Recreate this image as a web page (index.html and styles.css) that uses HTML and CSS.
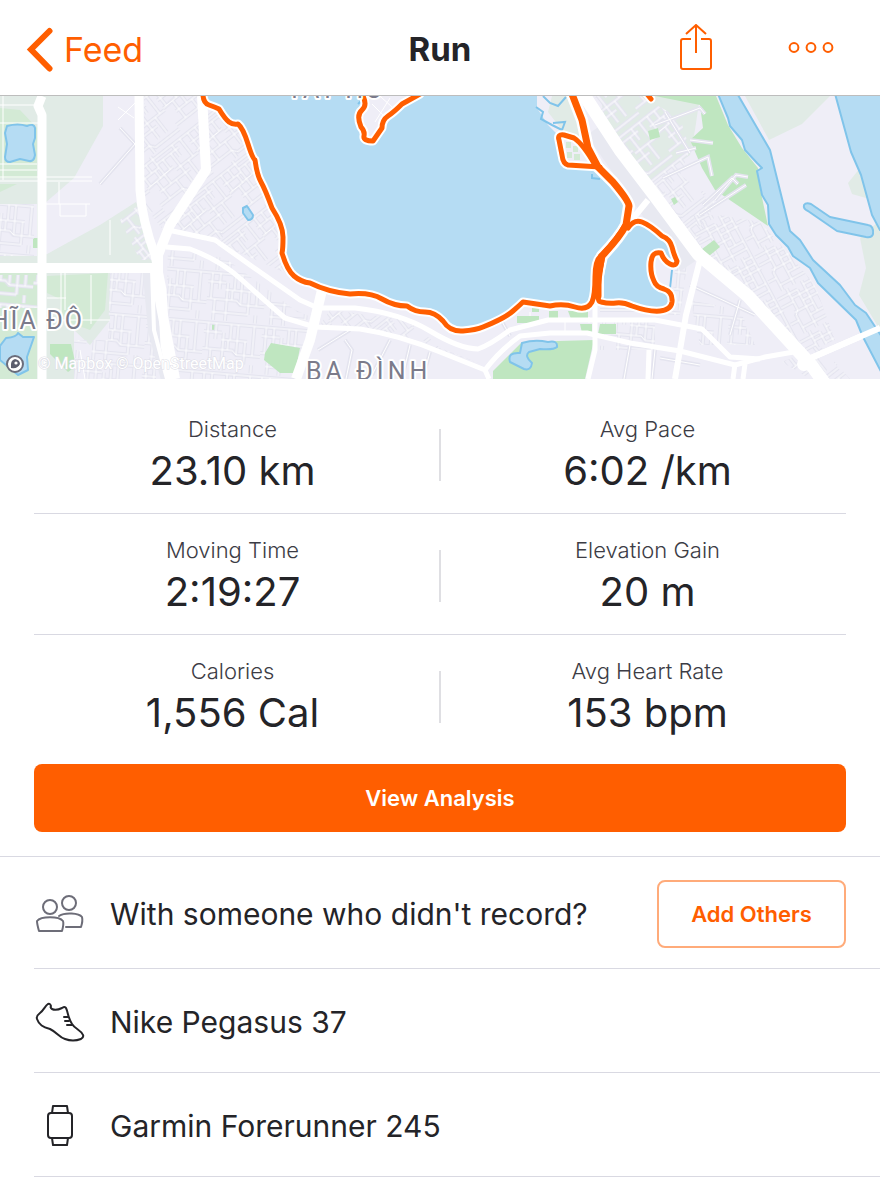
FILE: index.html
```html
<!DOCTYPE html>
<html lang="en">
<head>
    <meta charset="UTF-8">
    <meta name="viewport" content="width=device-width, initial-scale=1">
    <title>Run</title>
    <link rel="stylesheet" href="styles.css">
</head>
<body>
    <header class="navbar">
        <a class="back" href="#feed">
            <svg width="28" height="46" viewBox="0 0 28 46" aria-hidden="true"><path d="M23.500 4 5 22.500 23.500 41.500" fill="none" stroke="currentColor" stroke-width="6" stroke-linecap="round" stroke-linejoin="miter"/></svg>
            <span>Feed</span>
        </a>
        <h1>Run</h1>
        <div class="actions">
            <button type="button" aria-label="Share">
                <svg width="34" height="48" viewBox="0 0 34 48" aria-hidden="true"><g fill="none" stroke="currentColor" stroke-width="2"><path d="M11 15H3Q1 15 1 17V43Q1 45 3 45H29Q31 45 31 43V17Q31 15 29 15H21"/><path d="M16 29V1M6 10 16 1 26 10"/></g></svg>
            </button>
            <button type="button" aria-label="More">
                <svg width="46" height="12" viewBox="0 0 46 12" aria-hidden="true"><g fill="none" stroke="currentColor" stroke-width="2"><circle cx="6" cy="5.500" r="4.400"/><circle cx="23" cy="5.500" r="4.400"/><circle cx="40" cy="5.500" r="4.400"/></g></svg>
            </button>
        </div>
    </header>

    <svg class="map" viewBox="0 96 880 283" role="img" aria-label="Route map">
        <defs>
            <path id="gridA" d="M0 4H62M0 14H22M22 10H50M0 24 34 22M34 26H62M8 34H46M0 45H28L32 50H62M4 4V24M13 4V14M22 0V34M30 10V22M40 10V45M12 24V45M17 14V24M28 34V54M50 26V45M56 4V26M46 4V18"/>
            <path id="gridB" d="M0 3H58M0 12H18M18 19H44M0 29H30L34 33H58M6 42H42M4 3V29M12 3V19M20 12V50M27 19V3M34 3V33M42 19V42M8 29V50M25 19V29M50 3V33M50 42V50"/>
            <path id="gridC" d="M0 3H48M0 12H34M6 20H48M0 29H24L28 33H48M4 3V12M11 3V29M18 0V20M25 12V33M34 3V20M42 3V33M6 20V42M15 29V42M34 33V42"/>
            <pattern id="streetsA" width="62" height="54" patternUnits="userSpaceOnUse" patternTransform="rotate(-38)">
                <use href="#gridA" class="casing"/>
                <use href="#gridA" class="alley"/>
            </pattern>
            <pattern id="streetsB" width="58" height="50" patternUnits="userSpaceOnUse" patternTransform="rotate(5)">
                <use href="#gridB" class="casing"/>
                <use href="#gridB" class="alley"/>
            </pattern>
            <pattern id="streetsC" width="48" height="42" patternUnits="userSpaceOnUse" patternTransform="rotate(62)">
                <use href="#gridC" class="casing"/>
                <use href="#gridC" class="alley"/>
            </pattern>
            <path id="lanes" d="M690 140 713 143M663 178 708 157 712 176M676 153 696 148M655 125 700 108 705 114M665 112 690 153M715 200 736 175 748 177M703 205 732 178 738 184M700 215 746 185M318 350 350 330M345 340 352 350 346 379M390 340 372 375M410 345 402 379M430 352 425 370M500 318 510 336M690 285 755 315M600 310H660M630 345 624 379M655 350 652 379M700 365 660 358M740 300 730 335M120 128 135 144 100 184M380 96 393 108M372 104 386 118M375 122 390 98"/>
            <g id="route">
                <path d="M203 94Q203 103 209 105T219 109Q225 119 229 122T238 124Q243 128 248 144T255 160Q257 175 261 182T272 208Q283 225 283 237T282 253Q287 270 294 276T310 283Q328 292 350 294 370 292 382 299T407 306Q415 312 425 312T443 321Q450 332 463 331T483 327Q505 318 513 311T523 302L550 306Q563 303 575 307T592 302Q595 295 595 277T602 255Q618 238 625 225"/>
                <path d="M362 94Q368 105 362 110T361 127Q365 131 364 136T373 141L382 128Q382 120 388 116T402 104L420 94M600 167 568 165Q563 164 562 155L559 140Q557 134 564 135L574 138Q583 144 595 165M647 94 651 99"/>
                <path d="M628 228Q634 219 642 222T662 236Q670 239 672 247T677 261Q676 267 670 264T661 253Q652 251 651 262T654 281Q656 287 664 289 673 292 672 302 671 310 660 311T632 306Q623 302 616 303T601 302Q597 302 598 290T602 260"/>
            </g>
            <path id="double" d="M572 94 582 120 588 148 598 167 613 182Q629 201 629 206L626 225Q620 237 602 256L598 275V296"/>
        </defs>

        <rect class="land" x="0" y="96" width="880" height="283"/>

        <!-- parks -->
        <path class="meadow" d="M0 96H103V126L74 178 45 203V255L100 225 136 202 158 262V270H110V320L90 345 74 330V379H0Z"/>
        <path class="land" d="M47 203 74 180 92 182V228L47 254ZM0 204H37V256H0Z"/>
        <path class="grass" d="M0 108 20 110 37 128V178H0ZM0 184H17L0 192ZM0 273H37V379H0Z"/>
        <path class="grass" d="M47 276 108 273 105 310 90 330 62 320 60 299 47 293ZM59 276H88L82 318Z"/>
        <path class="park" d="M33 238H38V248H33ZM50 344H71L76 366 68 372 50 354ZM212 322H215V330H212Z"/>
        <path class="meadow" d="M552 96H575L582 120 582 140 566 135 548 112ZM600 96H700L695 130 690 155 640 190 612 150Z"/>
        <path class="park" d="M655 96H716L728 125 742 148 758 168 760 188 768 226 715 190 702 168 690 140 703 128 700 105Z"/>

        <!-- small streets -->
        <path fill="url(#streetsA)" d="M144 96H200L240 125 280 240 290 275 245 255 204 240 163 230 144 205Z"/>
        <path fill="url(#streetsB)" d="M168 250 225 258 295 310 318 320 300 379H180L166 300ZM0 204H34V256H0ZM0 275H38V308H0Z"/>
        <path fill="url(#streetsB)" d="M110 273H152L156 379H74V340H108Z"/>
        <path fill="url(#streetsA)" d="M120 220 137 206 158 260H140Z"/>
        <path fill="url(#streetsA)" d="M595 96H640L680 118 690 150 680 175 715 200 700 240 680 240 620 160Z"/>
        <path fill="url(#streetsC)" d="M690 215 720 215 760 222 790 255 815 285 835 340 808 352 745 292 700 250Z"/>
        <path fill="url(#streetsB)" d="M690 300 740 310 755 345 700 345ZM664 262 688 262 680 315H668ZM600 322H655V350H600Z"/>
        <path fill="url(#streetsA)" d="M330 310 410 320 440 348 484 365 400 335 320 325ZM782 362 820 345 850 379H810Z"/>
        <use href="#lanes" class="casing"/>
        <use href="#lanes" class="alley"/>
        <path class="alley" d="M0 105H40M0 123H38M3 96V180M0 164H37M0 170H37M0 177H92M0 181H92M45 204H90M60 204V216H86V204M59 182V204M118 107 134 118M118 120 138 100M61 273V325M65 273V310M91 275V324M47 298H66M47 320H110M80 350 85 379M110 220V255M565 320V333M530 312V320"/>
        <path class="park" d="M265 353 271 343 300 348 295 373H280L264 360ZM648 131 658 128 660 137 650 140ZM671 199 675 197 678 202 674 205ZM702 249 714 240 720 247 709 256Z"/>
        <path class="park" d="M517 316H539V323H517ZM532 308H539V312H532ZM549 311H558V318H549ZM568 311H588V319H571ZM580 324H592V333H582ZM600 324H616V334H598ZM493 371 522 342 594 340 585 379H493Z"/>
        <path class="meadow" d="M745 96H830L802 124 769 140ZM880 165 860 168 848 183 852 194 880 202ZM860 238 880 220V330L859 295 866 268Z"/>

        <!-- main roads -->
        <g class="road-edge">
            <path d="M151 265 157 330 170 379M594 130 640 196 688 266"/>
        </g>
        <g class="road">
            <path d="M42 96 38 106 42 115V379M139 96 140 190Q142 220 155 255L162 290 165 345 172 379" stroke-width="9"/>
            <path d="M0 268H157M202 96 206 170 170 225 158 255V290L175 379" stroke-width="10"/>
            <path d="M152 270 154 330 167 379" stroke-width="4"/>
            <path d="M168 230 215 240 250 265 300 300 318 308 355 308Q400 313 430 331T478 349Q490 345 510 330L548 320H590M166 247 190 249Q220 260 242 280T285 318L315 327 360 329Q400 335 440 352L485 370Q500 350 520 336L550 333H587L630 343 680 351 735 365 765 357 805 350" stroke-width="5"/>
            <path d="M485 370 489 379M588 320 655 320 702 329 730 357 760 359M595 305V350L588 379M649 350 648 379M735 364 733 379M745 364 743 379" stroke-width="5"/>
            <path d="M322 290 310 340 296 379" stroke-width="10"/>
            <path d="M582 92 620 150 655 196 698 254 748 296 812 366 828 388" stroke-width="13"/>
            <path d="M700 260 686 315 675 379M804 361 880 328" stroke-width="6"/>
            <path d="M648 200 630 222" stroke-width="6"/>
            <circle cx="804" cy="364" r="7" fill="#fff" stroke="none"/>
        </g>

        <!-- lakes and river -->
        <path class="water" d="M203 94 207 104 218 108 228 122 238 124 245 137 255 158 257 172 270 203 283 230V253L292 273 310 283 330 291 350 294 370 295 393 303 407 306 420 311 435 313 443 320 452 330 463 331 483 327 513 311 523 302 550 306 563 304 583 307 592 303 595 277 600 257 625 225 628 203 613 180 600 168 580 165 563 157 558 135 548 125 537 108 537 94Z"/>
        <path class="water" d="M637 221 668 240 676 262 662 253 652 257 651 273 660 288 671 293 669 308 640 309 623 303 600 302 599 277 607 253Z"/>
        <g class="water water-line">
            <path d="M7 126Q18 123 27 126 34 123 35 128V138L33 144 35 155Q34 162 29 161L20 159 10 162Q5 162 5 157L7 144 5 133ZM6 338Q17 337 18 333L23 337 34 337 27 357 28 370 18 375 0 360V346Z"/>
            <path d="M243 208 247 206 253 215Q253 220 248 220L243 213ZM522 343Q535 339 548 342 558 340 557 347 554 350 540 349L529 352Q524 356 532 363 531 371 524 369L510 362Q507 352 520 353Z"/>
            <path d="M718 94 728 118 730 126 742 140 745 150 757 163 762 168 757 171 762 195 768 205 769 224 776 235 788 247 793 256 810 268 818 283 856 320 863 337 888 385 888 346 866 313 855 305 840 285 813 260 800 240 790 231 770 150 738 95Z"/>
            <path d="M834 90 851 152 861 175 872 215 880 230 890 230V90Z"/>
            <path d="M804 205Q806 202 811 204L830 217 868 225Q874 226 873 234 872 238 866 237L837 231 808 211Q803 209 804 205Z"/>
        </g>
        <path class="road" d="M804 361 880 328" stroke-width="6"/>
        <path class="inlet" d="M536 107 543 112 541 119 552 125 562 130 565 122 553 123M543 96 550 103 558 106 566 97M592 174V178L600 179M672 270 670 288M362 100 358 104"/>
        <path class="land" d="M363 94H417L398 105 384 120 372 139 366 137 360 122 366 108Z"/>
        <path class="alley" d="M380 96 393 108M372 104 386 118M375 122 390 98"/>
        <path class="land" d="M561 137 572 139 588 158 594 166 570 164 564 155Z"/>
        <path class="grass" d="M566 142H571V148H566ZM573 146H578V152H573ZM567 152H572V158H567ZM574 154H580V160H574Z"/>
        <path class="land" d="M653 262 662 256 670 267 669 288 660 285 653 274Z"/>

        <!-- recorded route -->
        <use href="#route" class="route-halo"/>
        <use href="#double" class="route-halo thick"/>
        <use href="#route" class="route-line"/>
        <use href="#double" class="route-line thick"/>

        <g class="place">
            <text x="287" y="98">TÂY HỒ</text>
            <text x="84" y="329" text-anchor="end">NGHĨA ĐÔ</text>
            <text class="wide" x="306" y="380">BA ĐÌNH</text>
        </g>
        <text class="credit" x="38" y="369">© Mapbox © OpenStreetMap</text>
        <circle cx="15" cy="364" r="8" fill="#fff" stroke="#6b6d7b" stroke-width="2"/>
        <path d="M11 368Q10 360 15 359 20 360 20 364 18 369 11 368Z" fill="#5c5e6d"/>
        <circle cx="16" cy="363" r="1.600" fill="#fff"/>
    </svg>

    <main>
        <section class="stats">
            <div class="stats-row">
                <div class="stat"><span class="label">Distance</span><span class="value">23.10 km</span></div>
                <div class="divider"></div>
                <div class="stat"><span class="label">Avg Pace</span><span class="value">6:02 /km</span></div>
            </div>
            <div class="stats-row">
                <div class="stat"><span class="label">Moving Time</span><span class="value">2:19:27</span></div>
                <div class="divider"></div>
                <div class="stat"><span class="label">Elevation Gain</span><span class="value">20 m</span></div>
            </div>
            <div class="stats-row">
                <div class="stat"><span class="label">Calories</span><span class="value">1,556 Cal</span></div>
                <div class="divider"></div>
                <div class="stat"><span class="label">Avg Heart Rate</span><span class="value">153 bpm</span></div>
            </div>
            <button class="analysis" type="button">View Analysis</button>
        </section>

        <ul class="details">
            <li class="with">
                <svg class="icon muted" width="52" height="44" viewBox="0 0 52 44" aria-hidden="true"><g fill="none" stroke="currentColor" stroke-width="2" stroke-linecap="round" stroke-linejoin="round"><circle cx="16" cy="15" r="7"/><circle cx="35" cy="11" r="7"/><path d="M5 39Q3 32 3 29C7 24 25 24 29 29Q30 32 28 39ZM25 24C31 20 45 21 48 25Q49 29 47 35H32"/></g></svg>
                <span>With someone who didn't record?</span>
                <button class="add" type="button">Add Others</button>
            </li>
            <li>
                <svg class="icon" width="52" height="44" viewBox="0 0 52 44" aria-hidden="true"><g fill="none" stroke="currentColor" stroke-width="2" stroke-linecap="round" stroke-linejoin="round"><path d="M14 4C11 6 10 10 6 13Q2 16 3 19C5 25 9 27 16 29C24 33 25 37 31 39Q39 42 47 39Q50 37 49 35C47 30 41 29 38 24C34 18 34 12 32 8Q31 6 28 8Q22 11 18 9Q16 8 17 6Q16 3 14 4Z"/><path d="M34 17H30M35 21H31M38 25H33"/></g></svg>
                <span>Nike Pegasus 37</span>
            </li>
            <li>
                <svg class="icon" width="52" height="44" viewBox="0 0 52 44" aria-hidden="true"><g fill="none" stroke="currentColor" stroke-width="2" stroke-linejoin="round"><rect x="14" y="9" width="24" height="25" rx="3"/><path d="M18 9 19 2H33L34 9M18 34 19 41H33L34 34"/></g></svg>
                <span>Garmin Forerunner 245</span>
            </li>
        </ul>
    </main>
</body>
</html>
```
FILE: styles.css
```css
* {
    box-sizing: border-box;
    margin: 0;
    padding: 0;
}
body {
    font-family: Inter, "Liberation Sans", sans-serif;
    color: #242428;
    background: #fff;
}
button {
    font: inherit;
    border: 0;
    background: none;
    color: #ff5e00;
    cursor: pointer;
}
svg {
    display: block;
}

/* top bar */
.navbar {
    display: grid;
    grid-template-columns: 1fr auto 1fr;
    align-items: center;
    height: 96px;
    padding: 0 46px 0 26px;
    border-bottom: 1px solid #bdbdbd;
}
.navbar h1 {
    padding-left: 20px;
    padding-top: 2px;
    font-size: 33px;
    font-weight: 700;
}
.back {
    display: flex;
    align-items: center;
    gap: 10px;
    padding-top: 4px;
    font-size: 34px;
    color: #ff5e00;
    text-decoration: none;
}
.actions {
    display: flex;
    align-items: center;
    justify-content: flex-end;
    gap: 74px;
}

/* map */
.map {
    width: 100%;
    height: auto;
    overflow: hidden;
}
.land { fill: #efeef7; }
.meadow { fill: #e1ebe6; }
.grass { fill: #d3ead5; }
.park { fill: #bfe6c0; }
.water { fill: #b5dcf3; }
.water-line {
    stroke: #80c4ea;
    stroke-width: 2;
    stroke-linejoin: round;
}
.inlet {
    fill: none;
    stroke: #80c4ea;
    stroke-width: 2;
}
.casing {
    fill: none;
    stroke: #e4e4ef;
    stroke-width: 4;
}
.alley {
    fill: none;
    stroke: #fff;
    stroke-width: 1;
}
.road, .road-edge, .route-halo, .route-line {
    fill: none;
    stroke: #fff;
    stroke-linejoin: round;
}
.road-edge {
    stroke: #e8e9f1;
    stroke-width: 18;
}
.route-halo {
    stroke-width: 9;
    stroke-linecap: round;
}
.route-line {
    stroke: #ff5e00;
    stroke-width: 5;
    stroke-linecap: round;
}
.route-halo.thick {
    stroke-width: 12;
}
.route-line.thick {
    stroke-width: 7;
}
.place {
    font-family: Roboto, sans-serif;
    font-size: 25px;
    letter-spacing: 2px;
    fill: #7b7b8b;
    stroke: #fff;
    stroke-width: 4;
    stroke-linejoin: round;
    paint-order: stroke;
}
.place .wide {
    letter-spacing: 4px;
}
.credit {
    font-family: Roboto, sans-serif;
    font-size: 16px;
    fill: #fff;
    stroke: #dddde6;
    stroke-width: 1;
    paint-order: stroke;
}

/* numbers */
.stats {
    padding: 14px 34px 24px;
}
.stats-row {
    display: grid;
    grid-template-columns: 1fr 2px 1fr;
    gap: 8px;
    align-items: center;
    padding: 20px 0 16px;
    border-bottom: 1px solid #d9d9e2;
}
.stats-row:nth-child(3) {
    border-bottom: 0;
}
.stat {
    text-align: center;
}
.stat span {
    display: block;
}
.label {
    font-size: 22px;
    font-weight: 300;
    line-height: 32px;
    color: #3c3c45;
}
.value {
    font-size: 40px;
    line-height: 52px;
}
.divider {
    height: 52px;
    background: #dfdfe3;
}
.analysis {
    width: 100%;
    height: 68px;
    margin-top: 9px;
    border-radius: 8px;
    background: #ff5e00;
    color: #fff;
    font-size: 22px;
    font-weight: 600;
}

/* gear and partners */
.details {
    list-style: none;
    border-top: 1px solid #d9d9e2;
}
.details li {
    display: flex;
    align-items: center;
    min-height: 104px;
    margin-left: 34px;
    padding: 2px 34px 0 0;
    border-bottom: 1px solid #d9d9e2;
    font-size: 30px;
}
.details .with {
    min-height: 112px;
}
.icon {
    flex: none;
    margin-right: 24px;
}
.muted {
    color: #6d6d78;
}
.add {
    width: 189px;
    height: 68px;
    margin-left: auto;
    border: 2px solid #ffab7a;
    border-radius: 8px;
    font-size: 22px;
    font-weight: 600;
}
```
